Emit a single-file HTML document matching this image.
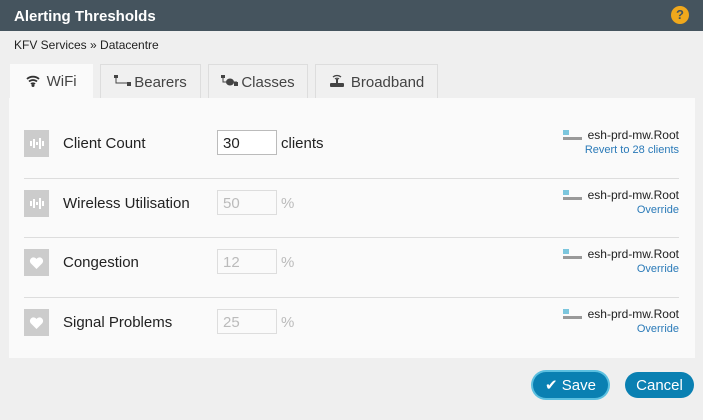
<!DOCTYPE html>
<html><head><style>
*{box-sizing:border-box;margin:0;padding:0}
body{width:703px;height:420px;background:#efefef;font-family:"Liberation Sans",sans-serif;position:relative;overflow:hidden;color:#222}
.hdr{position:absolute;left:0;top:0;width:703px;height:31px;background:#45545e;color:#fff;font-weight:bold;font-size:15px;padding:8px 14px}
.help{position:absolute;right:14px;top:6px;width:18px;height:18px;border-radius:50%;background:#f0a81c;color:#45545e;font-size:13px;font-weight:bold;text-align:center;line-height:18px}
.bc{position:absolute;left:14px;top:38px;font-size:12px}
.tab{position:absolute;top:64px;height:34px;border:1px solid #ddd;border-bottom:none;background:#f0f0f0;font-size:15px;color:#444;padding-top:9px;text-align:center}
.tab svg{vertical-align:-1px;margin-right:2px}
.tab.act{background:#fafafa;border:none}
.panel{position:absolute;left:9px;top:98px;width:686px;height:260px;background:#fafafa}
.row{position:absolute;left:15px;width:655px;height:60px}
.sep{position:absolute;left:15px;width:655px;height:1px;background:#ddd}
.ic{position:absolute;left:0;top:12px;width:25px;height:27px;background:#ccc}
.lab{position:absolute;left:39px;top:17px;font-size:15px}
.inp{position:absolute;left:193px;top:12px;width:60px;height:25px;border:1px solid #ddd;background:#fafafa;font-size:15px;color:#bbb;padding:4px 0 0 5px}
.inp.on{border-color:#bbb;background:#fff;color:#222}
.unit{position:absolute;left:257px;top:17px;font-size:15px;color:#bbb}
.r1{position:absolute;right:0;top:10px;font-size:12px;color:#222}
.r2{position:absolute;right:0;top:26px;font-size:11px;color:#2a7ab8}
.srv{display:inline-block;width:19px;height:10px;vertical-align:-1px;margin-right:6px;position:relative}
.srv:before{content:"";position:absolute;left:0;top:0;width:6px;height:5px;background:#7cc6dd}
.srv:after{content:"";position:absolute;left:0;bottom:0;width:19px;height:3px;background:#999}
.btn{position:absolute;top:372px;height:26px;border-radius:13px;background:#0a80b2;color:#fff;font-size:15px;text-align:center;line-height:28px}
</style></head><body>
<div class="hdr">Alerting Thresholds</div><div class="help">?</div>
<div class="bc">KFV Services » Datacentre</div>
<div class="tab act" style="left:10px;width:83px"><svg width="14" height="13" viewBox="0 0 14 13"><path d="M1 5a9 9 0 0 1 12 0M3 7.5a6 6 0 0 1 8 0" stroke="#333" stroke-width="1.8" fill="none"/><path d="M5 10a3 3 0 0 1 4 0" stroke="#333" stroke-width="1.8" fill="none"/><circle cx="7" cy="11.5" r="1.5" fill="#333"/></svg> WiFi</div>
<div class="tab" style="left:100px;width:101px"><svg width="18" height="13" viewBox="0 0 18 13"><rect x="0" y="0" width="4" height="3" fill="#444"/><path d="M2 3v5h12" stroke="#444" fill="none"/><rect x="13" y="7" width="4" height="4" fill="#444"/></svg>Bearers</div>
<div class="tab" style="left:208px;width:100px"><svg width="18" height="13" viewBox="0 0 18 13"><rect x="0" y="0" width="4" height="3" fill="#444"/><path d="M2 3v4h14" stroke="#444" fill="none"/><ellipse cx="9" cy="7" rx="4" ry="3.5" fill="#444"/><rect x="13" y="7" width="4" height="4" fill="#444"/></svg>Classes</div>
<div class="tab" style="left:315px;width:123px"><svg width="16" height="14" viewBox="0 0 16 14"><path d="M4 3a6 6 0 0 1 8 0M6 5a3 3 0 0 1 4 0" stroke="#444" fill="none" stroke-width="1.3"/><rect x="7" y="5" width="2" height="4" fill="#444"/><rect x="1" y="9" width="14" height="4" rx="1" fill="#444"/></svg> Broadband</div>
<div class="panel">
<div class="row" style="top:20px"><div class="ic"><svg width="25" height="27" viewBox="0 0 25 27"><path d="M7 11v5M10 9v9M13 12v3M16 8v11M19 11v5" stroke="#fff" stroke-width="2"/></svg></div><div class="lab">Client Count</div><div class="inp on">30</div><div class="unit" style="color:#222">clients</div><div class="r1"><span class="srv"></span>esh-prd-mw.Root</div><div class="r2">Revert to 28 clients</div></div>
<div class="sep" style="top:80px"></div>
<div class="row" style="top:80px"><div class="ic"><svg width="25" height="27" viewBox="0 0 25 27"><path d="M7 11v5M10 9v9M13 12v3M16 8v11M19 11v5" stroke="#fff" stroke-width="2"/></svg></div><div class="lab">Wireless Utilisation</div><div class="inp">50</div><div class="unit">%</div><div class="r1"><span class="srv"></span>esh-prd-mw.Root</div><div class="r2">Override</div></div>
<div class="sep" style="top:139px"></div>
<div class="row" style="top:139px"><div class="ic"><svg width="25" height="27" viewBox="0 0 25 27"><path d="M12.5 20L6.5 14a3.3 3.3 0 0 1 6-4a3.3 3.3 0 0 1 6 4z" fill="#fff"/></svg></div><div class="lab">Congestion</div><div class="inp">12</div><div class="unit">%</div><div class="r1"><span class="srv"></span>esh-prd-mw.Root</div><div class="r2">Override</div></div>
<div class="sep" style="top:199px"></div>
<div class="row" style="top:199px"><div class="ic"><svg width="25" height="27" viewBox="0 0 25 27"><path d="M12.5 20L6.5 14a3.3 3.3 0 0 1 6-4a3.3 3.3 0 0 1 6 4z" fill="#fff"/></svg></div><div class="lab">Signal Problems</div><div class="inp">25</div><div class="unit">%</div><div class="r1"><span class="srv"></span>esh-prd-mw.Root</div><div class="r2">Override</div></div>
</div>
<div class="btn" style="left:533px;width:75px;box-shadow:0 0 0 2px #5cc0e0">✔ Save</div>
<div class="btn" style="left:625px;width:69px">Cancel</div>
</body></html>
